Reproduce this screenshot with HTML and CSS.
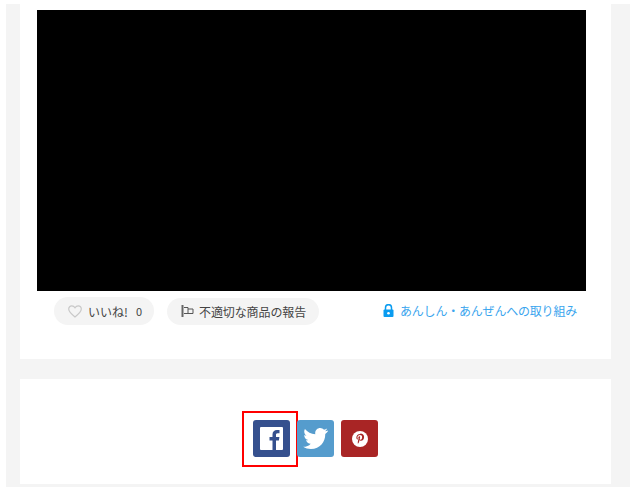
FILE: index.html
```html
<!DOCTYPE html>
<html lang="ja">
<head>
  <meta charset="UTF-8">
  <title>商品詳細</title>
  <link rel="stylesheet" href="styles.css">
</head>
<body>
  <div class="page">
    <div class="panel item">
      <div class="video"></div>
      <div class="actions">
        <a class="pill like">
          <svg class="heart" width="14" height="13" viewBox="0 0 14 13"><path d="M7 12C3 8.800.7 6.700.7 4.100.7 2.200 2.100.8 3.800.8 5.100.8 6.300 1.500 7 2.700 7.700 1.500 8.900.8 10.200.8c1.700 0 3.100 1.400 3.100 3.300C13.300 6.700 11 8.800 7 12z" fill="none" stroke="#c8c8c8" stroke-width="1.200"/></svg>
          <span>いいね!</span>
          <span class="count">0</span>
        </a>
        <a class="pill report">
          <svg width="13" height="12" viewBox="0 0 13 12"><path d="M1.500 0v12" stroke="#666" stroke-width="2"/><path d="M3 2.500h4v6H3M7 4h5v4.500H7" fill="none" stroke="#555" stroke-width="1"/></svg>
          <span>不適切な商品の報告</span>
        </a>
        <a class="safety">
          <svg width="11" height="13" viewBox="0 0 11 13"><path d="M2.500 6V3.700a3 3 0 0 1 6 0V6" fill="none" stroke="#0a9cf0" stroke-width="1.500"/><rect x=".5" y="5.500" width="10" height="7.500" rx="1" fill="#0a9cf0"/><circle cx="5.500" cy="9.200" r="1.300" fill="#fff"/></svg>
          <span>あんしん・あんぜんへの取り組み</span>
        </a>
      </div>
    </div>
    <div class="panel share">
      <a class="sns fb selected">
        <svg width="23" height="23" viewBox="0 0 23 23"><rect width="23" height="23" rx="1" fill="#fff"/><path d="M12.500 23v-9.500h-3V10h3V7.500c0-3 1.800-4.500 4.500-4.500 1.200 0 2.200.1 2.500.1v3.100h-1.800c-1.500 0-1.700.8-1.700 1.800v2h3.400l-.5 3.500H16V23z" fill="#35508e"/></svg>
      </a>
      <a class="sns tw">
        <svg width="25" height="21" viewBox="0 0 24 20.500"><path d="M24 2.400c-.9.400-1.800.7-2.800.8 1-.6 1.800-1.600 2.200-2.700-1 .6-2 1-3.100 1.200C19.300.7 18 0 16.600 0c-2.700 0-4.900 2.200-4.900 4.900 0 .4 0 .8.100 1.100C7.700 5.800 4.100 3.900 1.700.9 1.200 1.600 1 2.500 1 3.400c0 1.700.9 3.200 2.200 4.100-.8 0-1.600-.2-2.200-.6v.1c0 2.400 1.700 4.400 3.900 4.800-.7.200-1.500.2-2.200.1.600 1.900 2.400 3.300 4.600 3.400C5.600 17.400 3 18.300.2 18.300H0c2.200 1.400 4.800 2.200 7.500 2.200 9.100 0 14-7.500 14-14v-.6c1-.7 1.800-1.600 2.500-2.500z" fill="#fff"/></svg>
      </a>
      <a class="sns pt">
        <svg width="16" height="16" viewBox="0 0 18 18"><circle cx="9" cy="9" r="9" fill="#fff"/><path d="M9.300 3.500c-2.900 0-4.400 2-4.400 3.800 0 1 .4 1.900 1.200 2.300.1.100.3 0 .3-.1l.2-.6c0-.2 0-.2-.1-.4-.3-.3-.4-.7-.4-1.200 0-1.500 1.100-2.800 2.900-2.800 1.600 0 2.400 1 2.400 2.200 0 1.700-.7 3.100-1.800 3.100-.6 0-1-.5-.9-1.100.2-.7.5-1.500.5-2 0-.5-.3-.9-.8-.9-.7 0-1.200.7-1.200 1.600 0 .6.200 1 .2 1l-.8 3.300c-.2 1-.1 2.300 0 2.500 0 .1.100.1.200 0 .1-.1.900-1.200 1.200-2.200l.5-1.800c.2.500.9.900 1.600.9 2.100 0 3.500-1.900 3.500-4.400 0-2-1.600-3.800-4.300-3.800z" fill="#a92525"/></svg>
      </a>
    </div>
  </div>
</body>
</html>
```

FILE: styles.css
```css
body {
  margin: 0;
  background-color: #fff;
  font-family: "Noto Sans CJK JP", "Liberation Sans", sans-serif;
}
.page {
  margin: 4px 5px 8px 6px;
  padding: 0 19px 3px 14px;
  background-color: #f4f4f4;
}
.panel {
  background-color: #fff;
}
.item {
  height: 349px;
  padding: 6px 25px 0 17px;
  margin-bottom: 20px;
}
.video {
  height: 281px;
  background-color: #000;
}
.actions {
  display: flex;
  align-items: center;
  margin-top: 6px;
  padding-left: 17px;
  color: #444;
  font-size: 12px;
}
.pill {
  display: flex;
  align-items: center;
  height: 28px;
  border-radius: 14px;
  background-color: #f4f4f4;
}
.like {
  width: 100px;
  padding-left: 14px;
  box-sizing: border-box;
  gap: 6px;
}
.count {
  margin-left: 2px;
  font-size: 11px;
}
.report {
  width: 152px;
  height: 27px;
  margin-left: 13px;
  padding-left: 14px;
  box-sizing: border-box;
  gap: 5px;
  letter-spacing: -0.1px;
}
.safety {
  display: flex;
  align-items: center;
  gap: 6px;
  margin-left: auto;
  margin-right: 9px;
  padding-bottom: 1px;
  color: #3aa5ee;
  letter-spacing: -0.2px;
}
.share {
  height: 105px;
  display: flex;
  justify-content: center;
  align-items: flex-start;
  gap: 7px;
  padding-top: 41px;
  box-sizing: border-box;
}
.sns {
  display: flex;
  justify-content: center;
  align-items: center;
  position: relative;
  width: 37px;
  height: 37px;
  border-radius: 3px;
}
.fb {
  background-color: #35508e;
}
.selected::after {
  content: "";
  position: absolute;
  top: -9px;
  left: -11px;
  width: 52px;
  height: 52px;
  border: 2px solid #f00;
}
.tw {
  background-color: #559ccd;
}
.pt {
  background-color: #a92525;
}
```
